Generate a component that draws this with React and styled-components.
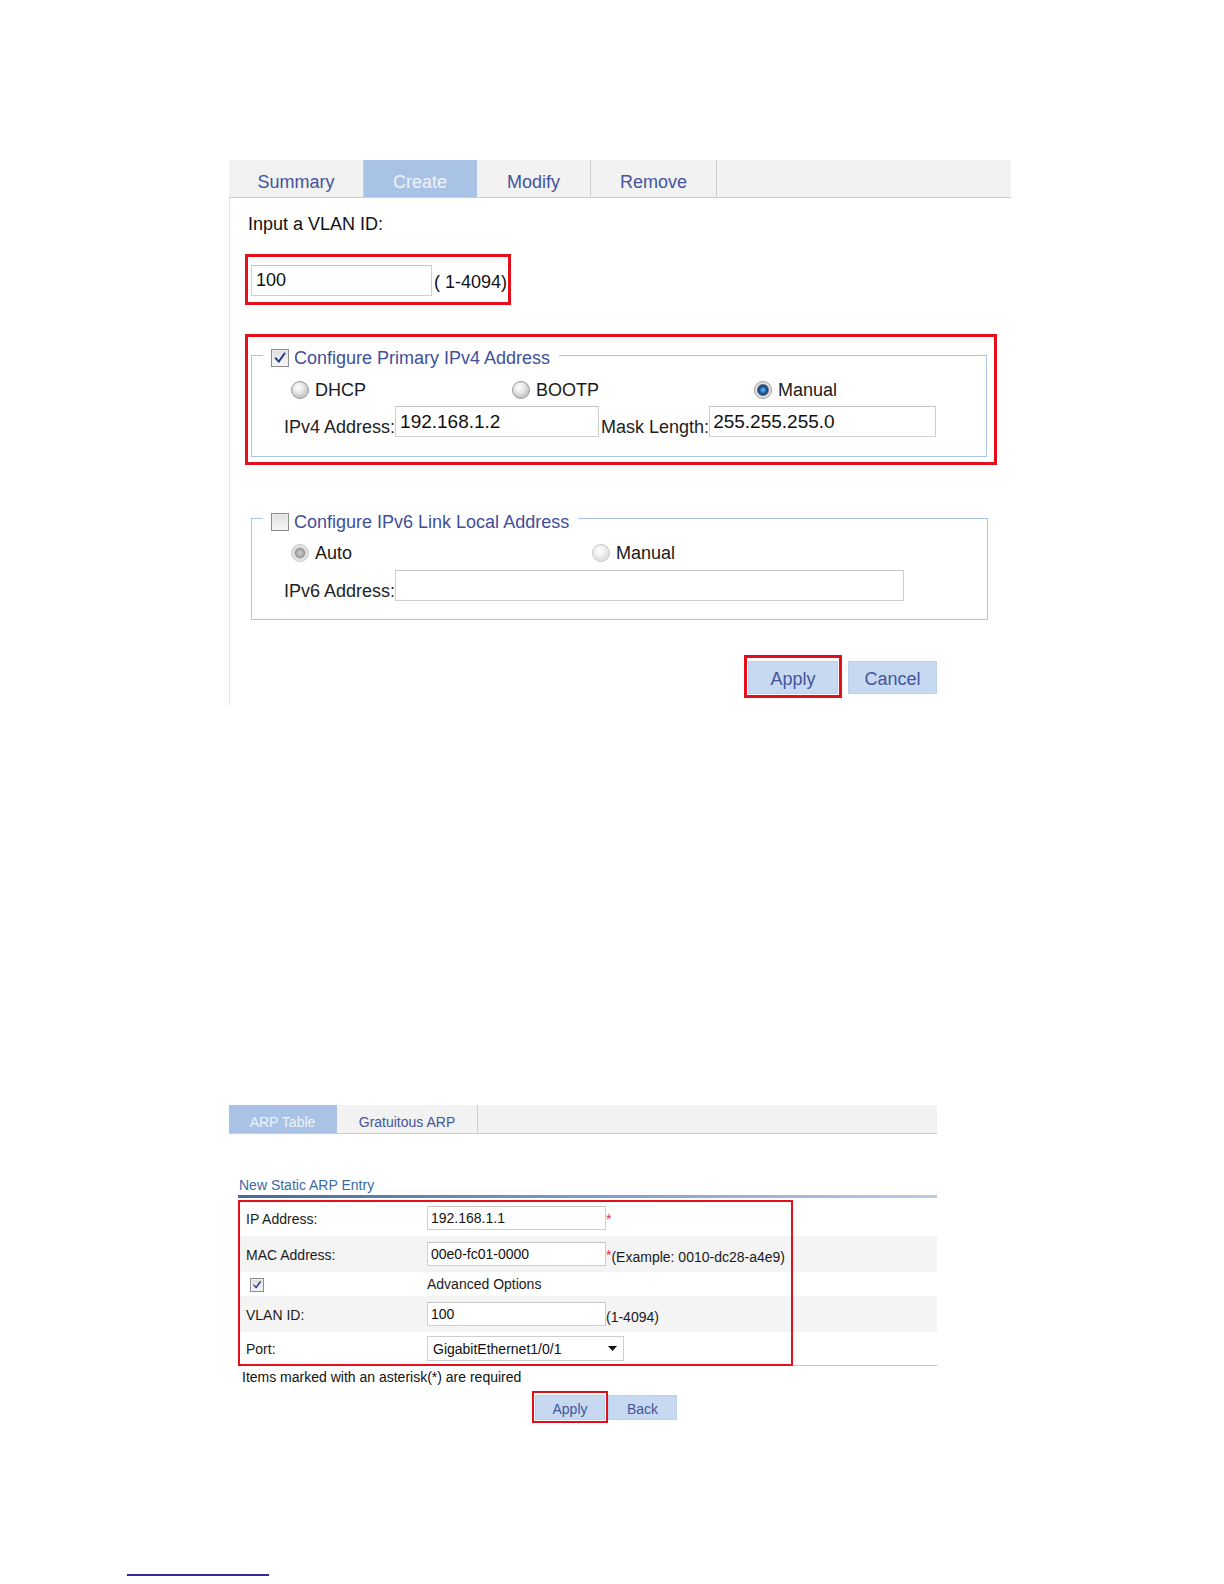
import React from 'react';
import styled, { createGlobalStyle } from 'styled-components';

const GlobalStyle = createGlobalStyle`
  html, body { margin: 0; padding: 0; background: #ffffff; }
  body { font-family: "Liberation Sans", Arial, sans-serif; color: #111; }
  * { box-sizing: border-box; }
`;

const Page = styled.div`
  width: 1224px;
  height: 1584px;
  overflow: hidden;
  padding-top: 160px;
  display: flex;
  flex-direction: column;
`;

/* ---------- shared ---------- */
const TabBar = styled.div`
  display: flex;
  flex-shrink: 0;
  height: ${p => p.$h}px;
  background: #f2f2f2;
  border-bottom: 1px solid #cdcdcd;
`;

const Tab = styled.div`
  width: ${p => p.$w}px;
  display: flex;
  align-items: center;
  justify-content: center;
  padding-top: ${p => p.$pt || 0}px;
  font-size: ${p => p.$fs}px;
  color: ${p => (p.$active ? '#eef3fb' : '#43549c')};
  background: ${p => (p.$active ? '#a9c3e6' : 'transparent')};
  border-right: 1px solid ${p => (p.$active ? '#a9c3e6' : '#cdcdcd')};
`;

const Highlight = styled.div`
  border: ${p => p.$bw || 3}px solid #e3101b;
`;

const TextInput = styled.input`
  width: ${p => p.$w}px;
  height: ${p => p.$h}px;
  margin: 0;
  padding: 0 ${p => p.$px || 4}px;
  border: 1px solid #d0d0d0;
  border-top-color: #c4c4c4;
  background: #fff;
  font-family: "Liberation Sans", Arial, sans-serif;
  font-size: ${p => p.$fs}px;
  color: #111;
  outline: none;
  flex-shrink: 0;
`;

const Button = styled.button`
  width: ${p => p.$w}px;
  height: ${p => p.$h}px;
  margin: 0;
  padding: ${p => p.$pt || 0}px 0 0 0;
  border: 1px solid #bcd0ea;
  background: #c7d9f1;
  color: #43549c;
  font-family: "Liberation Sans", Arial, sans-serif;
  font-size: ${p => p.$fs}px;
  flex-shrink: 0;
`;

const CheckBox = styled.span`
  width: ${p => p.$size}px;
  height: ${p => p.$size}px;
  flex-shrink: 0;
  display: inline-flex;
  align-items: center;
  justify-content: center;
  border: 1px solid #8d8d8d;
  background: linear-gradient(#dedede, #f7f7f7);
  box-shadow: inset 0 0 0 1px #efefef;
`;

const Check = ({ size, checked }) => (
  <CheckBox $size={size}>
    {checked && (
      <svg width={size - 4} height={size - 4} viewBox="0 0 16 16">
        <path d="M3 8.2 L6.6 12.2 L13.2 2.8" fill="none" stroke="#23348a" strokeWidth="2.2" strokeLinecap="round" strokeLinejoin="round" />
      </svg>
    )}
  </CheckBox>
);

/* ---------- VLAN create panel ---------- */
const VlanPanel = styled.section`
  margin-left: 229px;
  width: 782px;
  height: 545px;
  display: flex;
  flex-direction: column;
  flex-shrink: 0;
`;

const PanelBody = styled.div`
  flex: 1;
  border-left: 1px solid #e2e2e2;
  padding-left: 15px;
  display: flex;
  flex-direction: column;
  align-items: flex-start;
`;

const Prompt = styled.div`
  margin-top: 16px;
  padding-left: 3px;
  font-size: 18px;
  line-height: 20px;
  color: #111;
`;

const VlanBox = styled(Highlight)`
  margin-top: 20px;
  display: flex;
  align-items: center;
  gap: 2px;
  padding: 8px 1px 6px 3px;
`;

const RangeText = styled.span`
  font-size: 18px;
  line-height: 20px;
  padding-top: 3px;
  color: #111;
`;

const SectionBox = styled(Highlight)`
  margin-top: 29px;
  width: 752px;
  padding: 8px 7px 5px 3px;
`;

const Fieldset = styled.fieldset`
  margin: ${p => p.$m || 0};
  width: ${p => (p.$w ? `${p.$w}px` : 'auto')};
  padding: 0 0 ${p => p.$pb}px 0;
  border: 1px solid #a9c6e8;
  min-width: 0;
`;

const Legend = styled.legend`
  margin-left: 11px;
  padding: ${p => p.$shift}px 9px 0 8px;
  height: 20px;
`;

const LegendInner = styled.span`
  display: flex;
  align-items: center;
  gap: 5px;
  height: 20px;
  font-size: 18px;
  color: #3e4f9a;
  white-space: nowrap;
`;

const RadioRow = styled.div`
  margin-top: ${p => p.$mt}px;
  height: 22px;
  padding-left: 39px;
  display: grid;
  grid-template-columns: ${p => p.$cols};
  align-items: center;
`;

const RadioItem = styled.label`
  display: flex;
  align-items: center;
  gap: 6px;
  font-size: 18px;
  color: #1a1a1a;
`;

const radioBg = p => {
  if (p.$checked && !p.$disabled)
    return 'radial-gradient(circle at 50% 50%, #7cc4f2 0, #2a78c0 2.5px, #173d70 4.5px, #6d7a88 5.5px, #dcdcdc 6.5px, #f6f6f6 9px)';
  if (p.$checked)
    return 'radial-gradient(circle at 50% 50%, #d0d0d0 0, #aaaaaa 3.5px, #8e8e8e 4.5px, #d6d6d6 5.5px, #f2f2f2 9px)';
  if (p.$disabled)
    return 'radial-gradient(circle at 40% 35%, #ffffff 0, #f1f1f1 5px, #e0e0e0 9px)';
  return 'radial-gradient(circle at 40% 35%, #ffffff 0, #e9e9e9 5px, #c9c9c9 9px)';
};

const RadioDot = styled.span`
  width: 18px;
  height: 18px;
  flex-shrink: 0;
  border-radius: 50%;
  border: 1px solid ${p => (p.$disabled ? '#c6c6c6' : '#9a9a9a')};
  background: ${radioBg};
`;

const FieldRow = styled.div`
  margin-top: ${p => p.$mt}px;
  padding-left: 32px;
  display: flex;
  align-items: flex-end;
`;

const FieldLabel = styled.span`
  margin-left: ${p => p.$ml || 0}px;
  font-size: 18px;
  line-height: 20px;
  color: #222;
  white-space: nowrap;
`;

const ButtonRow = styled.div`
  margin-top: ${p => p.$mt}px;
  margin-left: ${p => p.$ml}px;
  display: flex;
  align-items: flex-start;
`;

const ApplyBox = styled(Highlight)`
  padding: ${p => p.$pad};
`;

const SideButton = styled(Button)`
  margin-top: ${p => p.$mt}px;
  margin-left: ${p => p.$ml}px;
`;

/* ---------- ARP panel ---------- */
const ArpPanel = styled.section`
  margin-top: 400px;
  margin-left: 229px;
  width: 708px;
  height: 318px;
  display: flex;
  flex-direction: column;
  align-items: flex-start;
  flex-shrink: 0;
`;

const ArpTabBar = styled(TabBar)`
  align-self: stretch;
`;

const ArpTitle = styled.div`
  margin-top: 43px;
  margin-left: 10px;
  font-size: 14px;
  line-height: 16px;
  color: #3b6aa6;
`;

const TitleRule = styled.div`
  margin-top: 2px;
  margin-left: 9px;
  width: 699px;
  height: 3px;
  background: linear-gradient(to right, #47689c, #7f9cc6 50%, #b9cce5);
`;

const ArpTable = styled.div`
  position: relative;
  margin-top: 2px;
  margin-left: 9px;
  width: 699px;
  border-bottom: 1px solid #a9c9ea;
`;

const TableRow = styled.div`
  height: ${p => p.$h}px;
  display: grid;
  grid-template-columns: 189px 1fr;
  align-items: center;
  background: ${p => (p.$alt ? '#f4f4f4' : '#ffffff')};
`;

const RowLabel = styled.div`
  padding-left: 8px;
  padding-top: 1px;
  font-size: 14px;
  color: #1a1a1a;
  display: flex;
  align-items: center;
`;

const RowValue = styled.div`
  display: flex;
  align-items: center;
  font-size: 14px;
  color: #1a1a1a;
  white-space: nowrap;
`;

const Star = styled.span`
  color: #e0323c;
  margin-top: 2px;
`;

const Note = styled.span`
  margin-top: 6px;
`;

const CheckCell = styled.span`
  margin-left: 4px;
  display: flex;
`;

const SelectBox = styled.div`
  width: 197px;
  height: 25px;
  padding: 0 6px 0 5px;
  border: 1px solid #cfcfcf;
  background: #fff;
  display: flex;
  align-items: center;
  justify-content: space-between;
  font-size: 14px;
  color: #111;
`;

const RowHighlight = styled(Highlight)`
  position: absolute;
  left: 0;
  top: 0;
  width: 555px;
  height: 166px;
  pointer-events: none;
`;

const Hint = styled.div`
  margin-top: 3px;
  margin-left: 13px;
  font-size: 14px;
  line-height: 16px;
  color: #111;
`;

const Footnote = styled.div`
  margin-top: 151px;
  margin-left: 127px;
  width: 142px;
  height: 2px;
  background: #2b2b9a;
  flex-shrink: 0;
`;

const Radio = ({ label, checked, disabled }) => (
  <RadioItem>
    <RadioDot $checked={checked} $disabled={disabled} />
    {label}
  </RadioItem>
);

export default function App() {
  return (
    <>
      <GlobalStyle />
      <Page>
        <VlanPanel>
          <TabBar $h={38}>
            <Tab $w={135} $fs={18} $pt={7}>Summary</Tab>
            <Tab $w={113} $fs={18} $pt={7} $active>Create</Tab>
            <Tab $w={114} $fs={18} $pt={7}>Modify</Tab>
            <Tab $w={126} $fs={18} $pt={7}>Remove</Tab>
          </TabBar>
          <PanelBody>
            <Prompt>Input a VLAN ID:</Prompt>
            <VlanBox>
              <TextInput $w={181} $h={31} $fs={18} defaultValue="100" readOnly />
              <RangeText>( 1-4094)</RangeText>
            </VlanBox>

            <SectionBox>
              <Fieldset $pb={19}>
                <Legend $shift={3}>
                  <LegendInner>
                    <Check size={18} checked />
                    Configure Primary IPv4 Address
                  </LegendInner>
                </Legend>
                <RadioRow $mt={14} $cols="221px 242px auto">
                  <Radio label="DHCP" />
                  <Radio label="BOOTP" />
                  <Radio label="Manual" checked />
                </RadioRow>
                <FieldRow $mt={5}>
                  <FieldLabel>IPv4 Address:</FieldLabel>
                  <TextInput $w={204} $h={31} $fs={19} $px={4} defaultValue="192.168.1.2" readOnly />
                  <FieldLabel $ml={2}>Mask Length:</FieldLabel>
                  <TextInput $w={227} $h={31} $fs={19} $px={3} defaultValue="255.255.255.0" readOnly />
                </FieldRow>
              </Fieldset>
            </SectionBox>

            <Fieldset $m="43px 0 0 6px" $w={737} $pb={18}>
              <Legend $shift={4}>
                <LegendInner>
                  <Check size={18} />
                  Configure IPv6 Link Local Address
                </LegendInner>
              </Legend>
              <RadioRow $mt={14} $cols="301px auto">
                <Radio label="Auto" checked disabled />
                <Radio label="Manual" disabled />
              </RadioRow>
              <FieldRow $mt={6}>
                <FieldLabel>IPv6 Address:</FieldLabel>
                <TextInput $w={509} $h={31} $fs={19} readOnly defaultValue="" />
              </FieldRow>
            </Fieldset>

            <ButtonRow $mt={35} $ml={499}>
              <ApplyBox $pad="3px 1px 1px 1px">
                <Button $w={90} $h={33} $fs={18} $pt={4}>Apply</Button>
              </ApplyBox>
              <SideButton $w={89} $h={33} $fs={18} $pt={4} $mt={6} $ml={6}>Cancel</SideButton>
            </ButtonRow>
          </PanelBody>
        </VlanPanel>

        <ArpPanel>
          <ArpTabBar $h={29}>
            <Tab $w={108} $fs={14} $pt={6} $active>ARP Table</Tab>
            <Tab $w={141} $fs={14} $pt={6}>Gratuitous ARP</Tab>
          </ArpTabBar>
          <ArpTitle>New Static ARP Entry</ArpTitle>
          <TitleRule />
          <ArpTable>
            <TableRow $h={36}>
              <RowLabel>IP Address:</RowLabel>
              <RowValue>
                <TextInput $w={179} $h={24} $fs={14} $px={3} defaultValue="192.168.1.1" readOnly />
                <Star>*</Star>
              </RowValue>
            </TableRow>
            <TableRow $h={36} $alt>
              <RowLabel>MAC Address:</RowLabel>
              <RowValue>
                <TextInput $w={179} $h={24} $fs={14} $px={3} defaultValue="00e0-fc01-0000" readOnly />
                <Star>*</Star>
                <Note>(Example: 0010-dc28-a4e9)</Note>
              </RowValue>
            </TableRow>
            <TableRow $h={24}>
              <RowLabel>
                <CheckCell>
                  <Check size={14} checked />
                </CheckCell>
              </RowLabel>
              <RowValue>Advanced Options</RowValue>
            </TableRow>
            <TableRow $h={36} $alt>
              <RowLabel>VLAN ID:</RowLabel>
              <RowValue>
                <TextInput $w={179} $h={24} $fs={14} $px={3} defaultValue="100" readOnly />
                <Note>(1-4094)</Note>
              </RowValue>
            </TableRow>
            <TableRow $h={33}>
              <RowLabel>Port:</RowLabel>
              <RowValue>
                <SelectBox>
                  GigabitEthernet1/0/1
                  <svg width="9" height="5" viewBox="0 0 9 5">
                    <path d="M0 0 H9 L4.5 5 Z" fill="#111" />
                  </svg>
                </SelectBox>
              </RowValue>
            </TableRow>
            <RowHighlight $bw={2} />
          </ArpTable>
          <Hint>Items marked with an asterisk(*) are required</Hint>
          <ButtonRow $mt={6} $ml={303}>
            <ApplyBox $bw={2} $pad="2px 1px 1px 1px">
              <Button $w={70} $h={25} $fs={14} $pt={3}>Apply</Button>
            </ApplyBox>
            <SideButton $w={69} $h={25} $fs={14} $pt={3} $mt={4} $ml={0}>Back</SideButton>
          </ButtonRow>
        </ArpPanel>

        <Footnote />
      </Page>
    </>
  );
}
